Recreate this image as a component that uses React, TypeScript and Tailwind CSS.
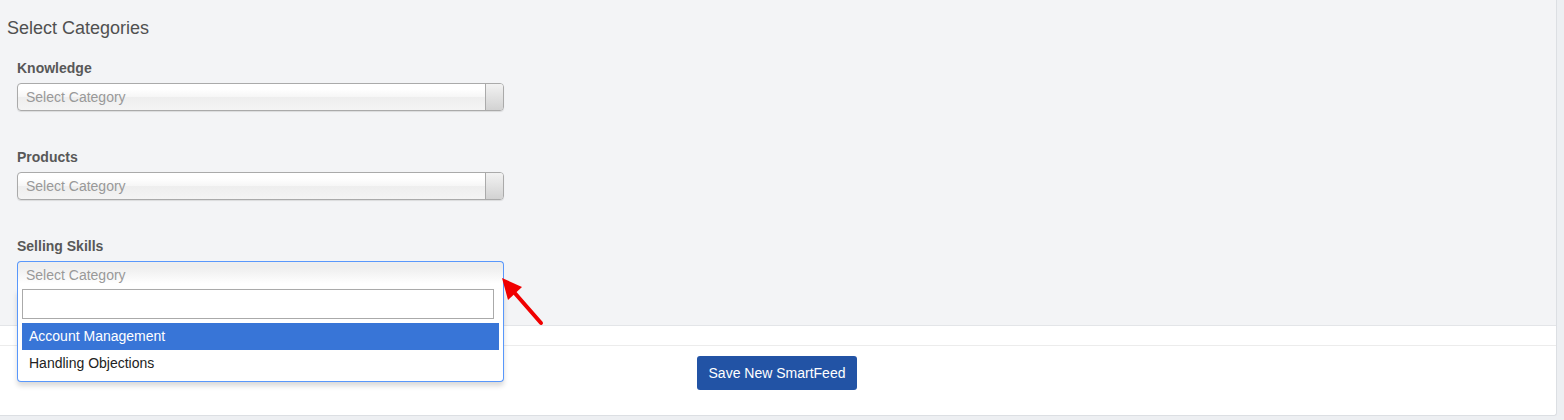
import React from 'react';

/* ─── Closed chosen-style select ─── */

function ClosedSelect() {
    return (
        <div className="flex h-[28px] w-[487px] overflow-hidden rounded-[4px] border border-[#aaa] bg-[linear-gradient(#fff_20%,#f6f6f6_50%,#eee_52%,#f4f4f4_100%)] shadow-[0_1px_1px_rgba(0,0,0,0.1)]">
            <span className="flex-1 pl-[8px] text-[14px] leading-[26px] text-[#999]">
                Select Category
            </span>
            <span className="w-[18px] border-l border-[#aaa] bg-[linear-gradient(#f2f2f2,#d2d2d2)]" />
        </div>
    );
}

/* ─── Open chosen-style select with drop ─── */

function OpenSelect() {
    const options = ['Account Management', 'Handling Objections'];

    return (
        <div className="relative w-[487px]">
            <div className="h-[28px] rounded-t-[4px] border border-b-0 border-[#5897fb] bg-[linear-gradient(#eee_20%,#fff_80%)] pl-[8px] text-[14px] leading-[26px] text-[#999]">
                Select Category
            </div>
            <div className="absolute left-0 top-full z-10 w-[487px] rounded-b-[4px] border border-t-0 border-[#5897fb] bg-white shadow-[0_4px_5px_rgba(0,0,0,0.15)]">
                <div className="pl-[4px] pr-[9px]">
                    <div className="h-[30px] border border-[#aaa] bg-white" />
                </div>
                <ul className="mb-[4px] mr-[4px] mt-[4px] pl-[4px]">
                    {options.map((opt, i) => (
                        <li
                            key={opt}
                            className={`h-[27px] pl-[7px] text-[14px] leading-[27px] ${
                                i === 0
                                    ? 'bg-[#3875d7] text-white'
                                    : 'text-[#222]'
                            }`}
                        >
                            {opt}
                        </li>
                    ))}
                </ul>
            </div>
        </div>
    );
}

/* ─── Annotation arrow ─── */

function RedArrow() {
    return (
        <svg
            className="absolute left-[495px] top-[270px] z-20"
            width="56"
            height="60"
            viewBox="0 0 56 60"
        >
            <line
                x1="18"
                y1="21"
                x2="46"
                y2="53"
                stroke="#f00000"
                strokeWidth="4"
                strokeLinecap="round"
            />
            <polygon points="7,8 27,17 13,30" fill="#f00000" />
        </svg>
    );
}

export default function App() {
    const groups = ['Knowledge', 'Products'];

    return (
        <div className="relative h-[420px] w-full overflow-hidden bg-[#edeff2] font-['Liberation_Sans',Arial,sans-serif]">
            <div className="flex h-[416px] w-[1557px] flex-col rounded-br-[3px] border-b border-r border-[#dcdfe3] bg-white">
                <div className="h-[326px] border-b border-[#e3e5e8] bg-[#f3f4f6]">
                    <h3 className="pl-[7px] pt-[17px] text-[18px] leading-[22px] text-[#505050]">
                        Select Categories
                    </h3>
                    <div className="flex flex-col gap-[36px] pl-[17px] pt-[19px]">
                        {groups.map((g) => (
                            <div key={g}>
                                <label className="block text-[14px] font-bold leading-[20px] text-[#585858]">
                                    {g}
                                </label>
                                <div className="mt-[5px]">
                                    <ClosedSelect />
                                </div>
                            </div>
                        ))}
                        <div>
                            <label className="block text-[14px] font-bold leading-[20px] text-[#585858]">
                                Selling Skills
                            </label>
                            <div className="mt-[5px]">
                                <OpenSelect />
                            </div>
                        </div>
                    </div>
                </div>
                <div className="h-[19px]" />
                <div className="flex flex-1 justify-center border-t border-[#ececec] pt-[10px]">
                    <button className="ml-[-2px] h-[34px] rounded-[3px] bg-[#2253a5] px-[12px] text-[14px] text-white">
                        Save New SmartFeed
                    </button>
                </div>
            </div>
            <RedArrow />
        </div>
    );
}
